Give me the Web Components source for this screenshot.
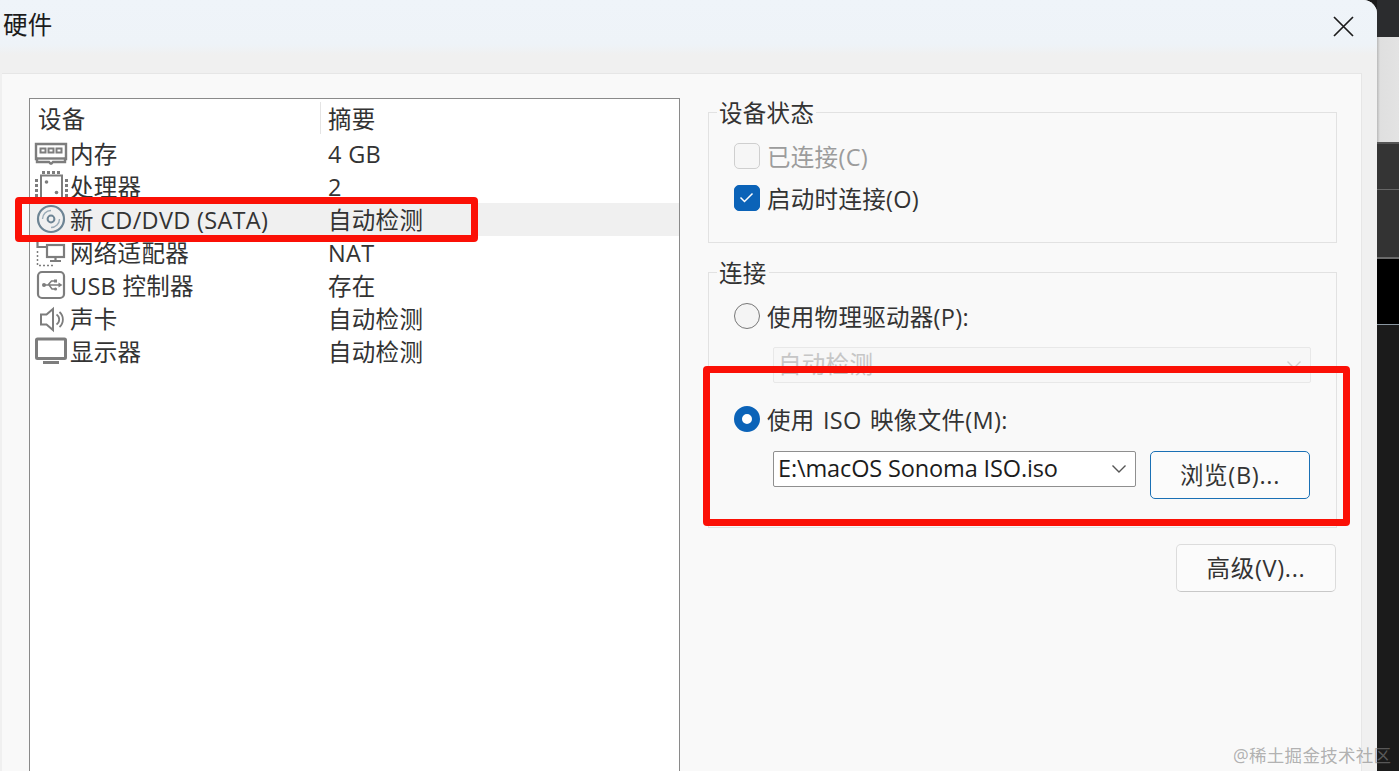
<!DOCTYPE html>
<html lang="zh">
<head>
<meta charset="utf-8">
<title>硬件</title>
<style>
  html, body { margin: 0; height: 771px; overflow: hidden; background: #1b1b1b; }
  body {
    position: relative;
    display: flex;
    font: 23.5px/32px "Open Sans", "Noto Sans CJK SC", sans-serif;
    letter-spacing: .3px;
    color: #1c1c1c;
  }
</style>
</head>
<body>
<hw-window title-text="硬件">
  <hw-device-list>
    <hw-device icon="ram" summary="4 GB">内存</hw-device>
    <hw-device icon="cpu" summary="2">处理器</hw-device>
    <hw-device icon="cd" summary="自动检测" selected>新 CD/DVD (SATA)</hw-device>
    <hw-device icon="net" summary="NAT">网络适配器</hw-device>
    <hw-device icon="usb" summary="存在">USB 控制器</hw-device>
    <hw-device icon="sound" summary="自动检测">声卡</hw-device>
    <hw-device icon="screen" summary="自动检测">显示器</hw-device>
  </hw-device-list>
  <hw-settings slot="side">
    <hw-group legend="设备状态" style="height:131px">
      <hw-check disabled>已连接(C)</hw-check>
      <hw-check checked style="margin-top:16px">启动时连接(O)</hw-check>
    </hw-group>
    <hw-group legend="连接" style="height:256px;margin-top:29px">
      <hw-radio>使用物理驱动器(P):</hw-radio>
      <hw-select disabled style="width:538px;margin:18px 0 0 39px">自动检测</hw-select>
      <hw-radio checked style="margin-top:23px;word-spacing:2px">使用 ISO 映像文件(M):</hw-radio>
      <hw-file-row style="margin:19px 0 0 39px">
        <hw-select style="width:363px;letter-spacing:-.13px">E:\macOS Sonoma ISO.iso</hw-select>
        <hw-button focused slot="action">浏览(B)...</hw-button>
      </hw-file-row>
    </hw-group>
    <hw-actions style="margin-top:16px">
      <hw-button>高级(V)...</hw-button>
    </hw-actions>
  </hw-settings>
</hw-window>
<hw-strip></hw-strip>
<hw-mark style="left:15px;top:197px;width:463px;height:45px"></hw-mark>
<hw-mark style="left:703px;top:366px;width:647px;height:160px"></hw-mark>
<hw-watermark>@稀土掘金技术社区</hw-watermark>

<script>
const ICONS = {
  ram: `<svg width="34" height="32" viewBox="0 0 34 32" fill="none" stroke="#7d7d7d" stroke-width="2.400">
    <path d="M2 6h30v15h-1v3H19l-1.500 1.500h-1L15 24H3v-3H2z"/><path d="M2 20.500h30"/>
    <g fill="#7d7d7d" stroke="none"><path d="M5.500 9.500h7v6h-7zM13.500 9.500h7v6h-7zM21.500 9.500h7v6h-7z"/></g>
    <g fill="#fff" stroke="none"><path d="M7.500 11.500h3v2h-3zM15.500 11.500h3v2h-3zM23.500 11.500h3v2h-3z"/></g></svg>`,
  cpu: `<svg width="34" height="32" viewBox="0 0 34 32" fill="none" stroke="#7d7d7d">
    <rect x="7" y="4.500" width="21" height="24" stroke-width="2"/>
    <path d="M8 1.500h18M8 31h18M2.500 8v18M32.500 8v18" stroke-width="3" stroke-dasharray="3 2"/>
    <circle cx="12.500" cy="11" r="1.800" fill="#7d7d7d" stroke="none"/><circle cx="22.500" cy="21.500" r="1.800" fill="#7d7d7d" stroke="none"/></svg>`,
  cd: `<svg width="34" height="32" viewBox="0 0 34 32" fill="none" stroke="#6d8494">
    <circle cx="17" cy="15" r="13" stroke-width="2.200"/>
    <circle cx="17" cy="15" r="3.400" stroke-width="2"/>
    <path d="M17 6.500a8.500 8.500 0 0 0-8.500 8.500M17 23.500a8.500 8.500 0 0 0 8.500-8.500" stroke-width="1.400" stroke="#9aabb7"/></svg>`,
  net: `<svg width="34" height="32" viewBox="0 0 34 32" fill="none" stroke="#7d7d7d" stroke-width="2.200">
    <path d="M3.500 0v10H13"/><rect x="13" y="8" width="17" height="12"/><path d="M21.500 20v3M16 24h11"/>
    <path d="M3.500 14v14.500H21" stroke-width="1.500" stroke-dasharray="2 2"/></svg>`,
  usb: `<svg width="34" height="32" viewBox="0 0 34 32" fill="none" stroke="#7d7d7d" stroke-width="2.200">
    <rect x="4" y="2" width="26" height="26" rx="4"/>
    <path d="M9 15h17M14 15l3.500-4h3M15 15l3 4h2.500" stroke-width="1.500"/>
    <circle cx="10" cy="15" r="2" fill="#7d7d7d" stroke="none"/><path d="M24.500 12.500l4 2.500-4 2.500z" fill="#7d7d7d" stroke="none"/>
    <rect x="20" y="9.500" width="3" height="3" fill="#7d7d7d" stroke="none"/><circle cx="21.500" cy="19" r="1.600" fill="#7d7d7d" stroke="none"/></svg>`,
  sound: `<svg width="34" height="32" viewBox="0 0 34 32" fill="none" stroke="#7d7d7d" stroke-width="2">
    <path d="M7 11.500h5.500L19 6v21l-6.500-5.500H7z"/><path d="M22.500 11.500a6 6 0 0 1 0 10M25.500 9a10 10 0 0 1 0 15" stroke-width="1.800"/></svg>`,
  screen: `<svg width="34" height="32" viewBox="0 0 34 32" fill="none" stroke="#7d7d7d" stroke-width="3">
    <rect x="2.500" y="3" width="29" height="19.500" rx="1"/><path d="M9 26.500h16" stroke-width="3"/></svg>`
};

class HwWindow extends HTMLElement {
  constructor() {
    super();
    this.attachShadow({mode: 'open'}).innerHTML = `
      <style>
        :host { display: block; width: 1377px; height: 771px; background: #f0f0f0; border-top-right-radius: 14px; overflow: hidden; }
        .bar {
          height: 55px;
          padding: 9px 23px 0 3px;
          display: flex;
          justify-content: space-between;
          background: linear-gradient(#eff4f9 0, #eef3f8 44px, #f0f0f0 55px);
          box-sizing: border-box;
        }
        .title { font-size: 24.500px; }
        .bar svg { margin-top: 7px; }
        .panel {
          width: 1360px;
          height: 698px;
          margin: 18px 0 0 2px;
          padding: 24px 0 0 27px;
          display: flex;
          gap: 28px;
          box-sizing: border-box;
          background: #f9f9f9;
          border: 1px solid #e6e6e6;
          border-width: 1px 1px 0 0;
        }
      </style>
      <div class="bar">
        <span class="title"></span>
        <svg width="21" height="21" viewBox="0 0 21 21" stroke="#1c1c1c" stroke-width="1.700"><path d="M1 1l19 19M20 1L1 20"/></svg>
      </div>
      <div class="panel"><slot></slot><slot name="side"></slot></div>
    `;
    this.shadowRoot.querySelector('.title').textContent = this.getAttribute('title-text');
  }
}

class HwDeviceList extends HTMLElement {
  constructor() {
    super();
    this.attachShadow({mode: 'open'}).innerHTML = `
      <style>
        :host { display: block; width: 651px; height: 680px; background: #fff; border: 1px solid #8a8a8a; box-sizing: border-box; color: #333; }
        .head { display: grid; grid-template-columns: 290px 1fr; height: 38px; align-items: center; }
        .head span { padding: 2px 0 0 8px; line-height: 30px; }
        .head span + span { border-left: 1px solid #e4e4e4; padding-left: 7px; }
      </style>
      <div class="head"><span>设备</span><span>摘要</span></div>
      <slot></slot>
    `;
  }
}

class HwDevice extends HTMLElement {
  constructor() {
    super();
    this.attachShadow({mode: 'open'}).innerHTML = `
      <style>
        :host { display: grid; grid-template-columns: 298px 1fr; height: 33px; align-items: center; }
        :host([selected]) { background: #f0f0f0; }
        .name { display: flex; align-items: center; gap: 2px; padding-left: 4px; white-space: nowrap; }
        svg { display: block; flex: none; }
        .icon { height: 32px; }
      </style>
      <div class="name"><span class="icon"></span><span class="label"><slot></slot></span></div>
      <div class="sum"></div>
    `;
    this.shadowRoot.querySelector('.icon').innerHTML = ICONS[this.getAttribute('icon')];
    this.shadowRoot.querySelector('.sum').textContent = this.getAttribute('summary');
  }
}

class HwSettings extends HTMLElement {
  constructor() {
    super();
    this.attachShadow({mode: 'open'}).innerHTML = `
      <style>
        :host { display: block; width: 629px; padding-top: 14px; }
      </style>
      <slot></slot>
    `;
  }
}

class HwGroup extends HTMLElement {
  constructor() {
    super();
    this.attachShadow({mode: 'open'}).innerHTML = `
      <style>
        :host { display: block; position: relative; box-sizing: border-box; border: 1px solid #e2e2e2; padding: 30px 0 0 25px; }
        .legend { position: absolute; left: 8px; top: -16px; padding: 0 2px; background: #f9f9f9; color: #333; }
      </style>
      <div class="legend"></div>
      <slot></slot>
    `;
    this.shadowRoot.querySelector('.legend').textContent = this.getAttribute('legend');
  }
}

class HwCheck extends HTMLElement {
  constructor() {
    super();
    this.attachShadow({mode: 'open'}).innerHTML = `
      <style>
        :host { display: flex; align-items: center; gap: 7px; height: 26px; color: #333; }
        :host([disabled]) { color: #9c9c9c; }
        .box { width: 26px; height: 26px; box-sizing: border-box; border-radius: 5px; border: 1.500px solid #cfcfcf; background: #f6f6f6; display: block; }
        :host([checked]) .box { background: #0b63b8; border-color: #0b63b8; }
        .text { padding-top: 2px; }
        svg { display: none; }
        :host([checked]) svg { display: block; }
      </style>
      <span class="box"><svg width="23" height="23" viewBox="0 0 23 23" fill="none" stroke="#fff" stroke-width="1.500"><path d="M5.500 11.500l4 4 8-8"/></svg></span>
      <span class="text"><slot></slot></span>
    `;
  }
}

class HwRadio extends HTMLElement {
  constructor() {
    super();
    this.attachShadow({mode: 'open'}).innerHTML = `
      <style>
        :host { display: flex; align-items: center; gap: 7px; height: 26px; color: #333; white-space: nowrap; }
        .dot { width: 26px; height: 26px; box-sizing: border-box; border-radius: 50%; border: 1.500px solid #777; background: #f4f4f4; }
        :host([checked]) .dot { border: 8px solid #0b63b8; background: #fff; }
        .text { padding-top: 2px; }
      </style>
      <span class="dot"></span>
      <span class="text"><slot></slot></span>
    `;
  }
}

class HwSelect extends HTMLElement {
  constructor() {
    super();
    this.attachShadow({mode: 'open'}).innerHTML = `
      <style>
        :host { display: flex; align-items: center; justify-content: space-between; height: 36px; box-sizing: border-box; padding: 0 8px 0 4px; background: #fff; border: 1px solid #8f8f8f; border-radius: 2px; white-space: nowrap; flex: none; }
        :host([disabled]) { background: #f7f7f7; border-color: #e8e8e8; color: #c6c6c6; }
        .text { padding-bottom: 2px; }
        svg { stroke: #555; flex: none; }
        :host([disabled]) svg { stroke: #cfcfcf; }
      </style>
      <span class="text"><slot></slot></span>
      <svg width="16" height="10" viewBox="0 0 16 10" fill="none" stroke-width="1.400"><path d="M1.500 1.500L8 8l6.500-6.500"/></svg>
    `;
  }
}

class HwFileRow extends HTMLElement {
  constructor() {
    super();
    this.attachShadow({mode: 'open'}).innerHTML = `
      <style>
        :host { display: flex; align-items: flex-start; gap: 14px; }
      </style>
      <slot></slot><slot name="action"></slot>
    `;
  }
}

class HwButton extends HTMLElement {
  constructor() {
    super();
    this.attachShadow({mode: 'open'}).innerHTML = `
      <style>
        :host { display: flex; align-items: center; justify-content: center; width: 160px; height: 48px; box-sizing: border-box; background: #fbfbfb; border: 1px solid #dcdcdc; border-bottom-color: #c8c8c8; border-radius: 5px; color: #333; white-space: nowrap; letter-spacing: .7px; }
        :host([focused]) { border: 1.500px solid #1a70b5; }
      </style>
      <slot></slot>
    `;
  }
}

class HwActions extends HTMLElement {
  constructor() {
    super();
    this.attachShadow({mode: 'open'}).innerHTML = `
      <style>
        :host { display: flex; justify-content: flex-end; padding-right: 1px; }
      </style>
      <slot></slot>
    `;
  }
}

class HwStrip extends HTMLElement {
  constructor() {
    super();
    this.attachShadow({mode: 'open'}).innerHTML = `
      <style>
        :host { display: flex; flex-direction: column; width: 22px; height: 771px; flex: none; }
        div { flex: none; }
        .a { height: 37px; background: #2b2c2e; }
        .b { height: 105px; background: linear-gradient(90deg, #b9b9b9 0, #dfdfdf 3px, #e3e3e3 100%); }
        .c { height: 47px; background: #343434; border-top: 2px solid #555; box-sizing: border-box; }
        .d { height: 70px; background: #333; border-top: 1px solid #666; box-sizing: border-box; border-bottom: 2px solid #6a6a6a; }
        .e { height: 66px; background: #000; border-bottom: 1px solid #8a96a0; box-sizing: border-box; }
        .f { height: 446px; background: #1b1b1b; }
      </style>
      <div class="a"></div><div class="b"></div><div class="c"></div><div class="d"></div><div class="e"></div><div class="f"></div>
    `;
  }
}

class HwMark extends HTMLElement {
  constructor() {
    super();
    this.attachShadow({mode: 'open'}).innerHTML = `
      <style>
        :host { display: block; position: absolute; box-sizing: border-box; border: 7px solid #fb1006; border-radius: 4px; }
      </style>
    `;
  }
}

class HwWatermark extends HTMLElement {
  constructor() {
    super();
    this.attachShadow({mode: 'open'}).innerHTML = `
      <style>
        :host { display: block; position: absolute; left: 1233px; top: 743px; font-size: 17.500px; line-height: 24px; color: rgba(130, 130, 130, .62); white-space: nowrap; }
      </style>
      <slot></slot>
    `;
  }
}

customElements.define('hw-window', HwWindow);
customElements.define('hw-device-list', HwDeviceList);
customElements.define('hw-device', HwDevice);
customElements.define('hw-settings', HwSettings);
customElements.define('hw-group', HwGroup);
customElements.define('hw-check', HwCheck);
customElements.define('hw-radio', HwRadio);
customElements.define('hw-select', HwSelect);
customElements.define('hw-file-row', HwFileRow);
customElements.define('hw-button', HwButton);
customElements.define('hw-actions', HwActions);
customElements.define('hw-strip', HwStrip);
customElements.define('hw-mark', HwMark);
customElements.define('hw-watermark', HwWatermark);
</script>
</body>
</html>
